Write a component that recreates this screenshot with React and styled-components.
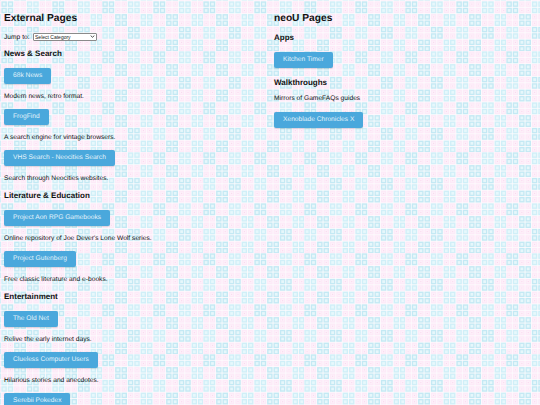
import styled, { createGlobalStyle } from 'styled-components';

const buildTile = () => {
  let cells = '';
  const blueSquare = (x, y, edge, fill) =>
    `<rect x="${x + 0.7}" y="${y + 0.7}" width="10.8" height="10.8" fill="${edge}"/><rect x="${x + 3.4}" y="${y + 3.4}" width="5.4" height="5.4" fill="${fill}"/>`;
  const pinkSquare = (x, y) =>
    `<rect x="${x + 0.7}" y="${y + 0.7}" width="10.8" height="10.8" fill="#fdeaf8"/><rect x="${x + 3.4}" y="${y + 3.4}" width="5.4" height="5.4" fill="#fef4fb"/><rect x="${x + 5}" y="${y + 5}" width="2.2" height="2.2" fill="#fbd6ef"/>`;
  const corners = (x, y, draw) => draw(x, y) + draw(x + 12.5, y) + draw(x, y + 12.5) + draw(x + 12.5, y + 12.5);

  const dark = ['#c4e9f4', '#e6f7fb'];
  const light = ['#d0eff8', '#e6f8fc'];
  [[0, 0, dark], [50, 0, light], [25, 25, dark], [75, 25, light], [0, 50, light], [50, 50, dark], [25, 75, dark], [75, 75, light]].forEach(([x, y, [edge, fill]]) => {
    cells += corners(x, y, (a, b) => blueSquare(a, b, edge, fill));
  });
  [[25, 0], [75, 0], [0, 25], [50, 25], [25, 50], [75, 50], [0, 75], [50, 75]].forEach(([x, y]) => {
    cells += corners(x, y, pinkSquare);
  });
  return `<svg xmlns="http://www.w3.org/2000/svg" width="100" height="100" viewBox="0 0 100 100"><rect width="100" height="100" fill="#fdfcfe"/>${cells}</svg>`;
};

const selectArrow = `<svg xmlns="http://www.w3.org/2000/svg" width="6" height="4" viewBox="0 0 6 4"><path d="M0.8 0.8 L3 3 L5.2 0.8" fill="none" stroke="#222" stroke-width="1"/></svg>`;

const GlobalStyle = createGlobalStyle`
  html {
    overflow: hidden;
  }
  body {
    margin: 0;
    font-family: "Liberation Sans", Arial, sans-serif;
    font-size: 6.67px;
    color: #111;
    text-rendering: geometricPrecision;
    background-color: #fdfcfe;
    background-image: url("data:image/svg+xml,${encodeURIComponent(buildTile())}");
    background-size: 50.5px 50.5px;
    background-position: 1.5px 1px;
  }
`;

const Page = styled.div`
  display: grid;
  grid-template-columns: 1fr 1fr;
`;

const Column = styled.div`
  padding: 12px 4px 0;
  min-width: 0;
`;

const PageTitle = styled.h2`
  margin: 0 0 5px;
  font-size: 10.2px;
  line-height: 14px;
  font-weight: bold;
`;

const JumpRow = styled.div`
  display: flex;
  align-items: center;
  gap: 3px;
  height: 11px;
  margin-bottom: 5px;
`;

const JumpLabel = styled.span`
  position: relative;
  top: 0.5px;
`;

const JumpSelect = styled.select`
  appearance: none;
  box-sizing: border-box;
  width: 64px;
  height: 8px;
  padding: 0 0 0 1.5px;
  font-size: 5px;
  line-height: 7px;
  color: #222;
  font-family: "Liberation Sans", Arial, sans-serif;
  border: 0.5px solid #8a8a8a;
  border-radius: 1px;
  background: #fff url("data:image/svg+xml,${encodeURIComponent(selectArrow)}") no-repeat right 1.5px center;
  background-size: 4.5px 3px;
`;

const Section = styled.section`
  display: flex;
  flex-direction: column;
  align-items: flex-start;
  margin-bottom: ${({ $gap }) => $gap || '5px'};
`;

const SectionTitle = styled.h3`
  margin: 0 0 ${({ $tight }) => ($tight ? '4.5px' : '8px')};
  font-size: 8px;
  line-height: 13px;
  font-weight: bold;
`;

const Entry = styled.div`
  display: flex;
  flex-direction: column;
  align-items: flex-start;
  margin-bottom: 7px;

  &:last-child {
    margin-bottom: 0;
  }
`;

const LinkButton = styled.a`
  display: block;
  height: 16px;
  padding: 0 9px;
  line-height: 16px;
  font-size: 6.67px;
  color: #e4f3fb;
  background: #4aa8dc;
  border-radius: 2px;
  box-shadow: 0 0.5px 1px rgba(0, 0, 0, 0.12);
`;

const Blurb = styled.p`
  margin: ${({ $intro }) => ($intro ? '0 0 8.5px' : '8px 0 0')};
  font-size: 6.67px;
  line-height: 10px;
`;

const external = [
  {
    title: 'News & Search',
    items: [
      ['68k News', 'Modern news, retro format.'],
      ['FrogFind', 'A search engine for vintage browsers.'],
      ['VHS Search - Neocities Search', 'Search through Neocities websites.'],
    ],
  },
  {
    title: 'Literature & Education',
    items: [
      ['Project Aon RPG Gamebooks', "Online repository of Joe Dever's Lone Wolf series."],
      ['Project Gutenberg', 'Free classic literature and e-books.'],
    ],
  },
  {
    title: 'Entertainment',
    items: [
      ['The Old Net', 'Relive the early internet days.'],
      ['Clueless Computer Users', 'Hilarious stories and anecdotes.'],
      ['Serebii Pokedex', ''],
    ],
  },
];

export default function App() {
  return (
    <>
      <GlobalStyle />
      <Page>
        <Column>
          <PageTitle>External Pages</PageTitle>
          <JumpRow>
            <JumpLabel>Jump to:</JumpLabel>
            <JumpSelect defaultValue="">
              <option value="">Select Category</option>
            </JumpSelect>
          </JumpRow>
          {external.map(section => (
            <Section key={section.title}>
              <SectionTitle>{section.title}</SectionTitle>
              {section.items.map(([name, text]) => (
                <Entry key={name}>
                  <LinkButton>{name}</LinkButton>
                  {text && <Blurb>{text}</Blurb>}
                </Entry>
              ))}
            </Section>
          ))}
        </Column>
        <Column>
          <PageTitle>neoU Pages</PageTitle>
          <Section $gap="8px">
            <SectionTitle>Apps</SectionTitle>
            <LinkButton>Kitchen Timer</LinkButton>
          </Section>
          <Section>
            <SectionTitle $tight>Walkthroughs</SectionTitle>
            <Blurb $intro>Mirrors of GameFAQs guides</Blurb>
            <LinkButton>Xenoblade Chronicles X</LinkButton>
          </Section>
        </Column>
      </Page>
    </>
  );
}
